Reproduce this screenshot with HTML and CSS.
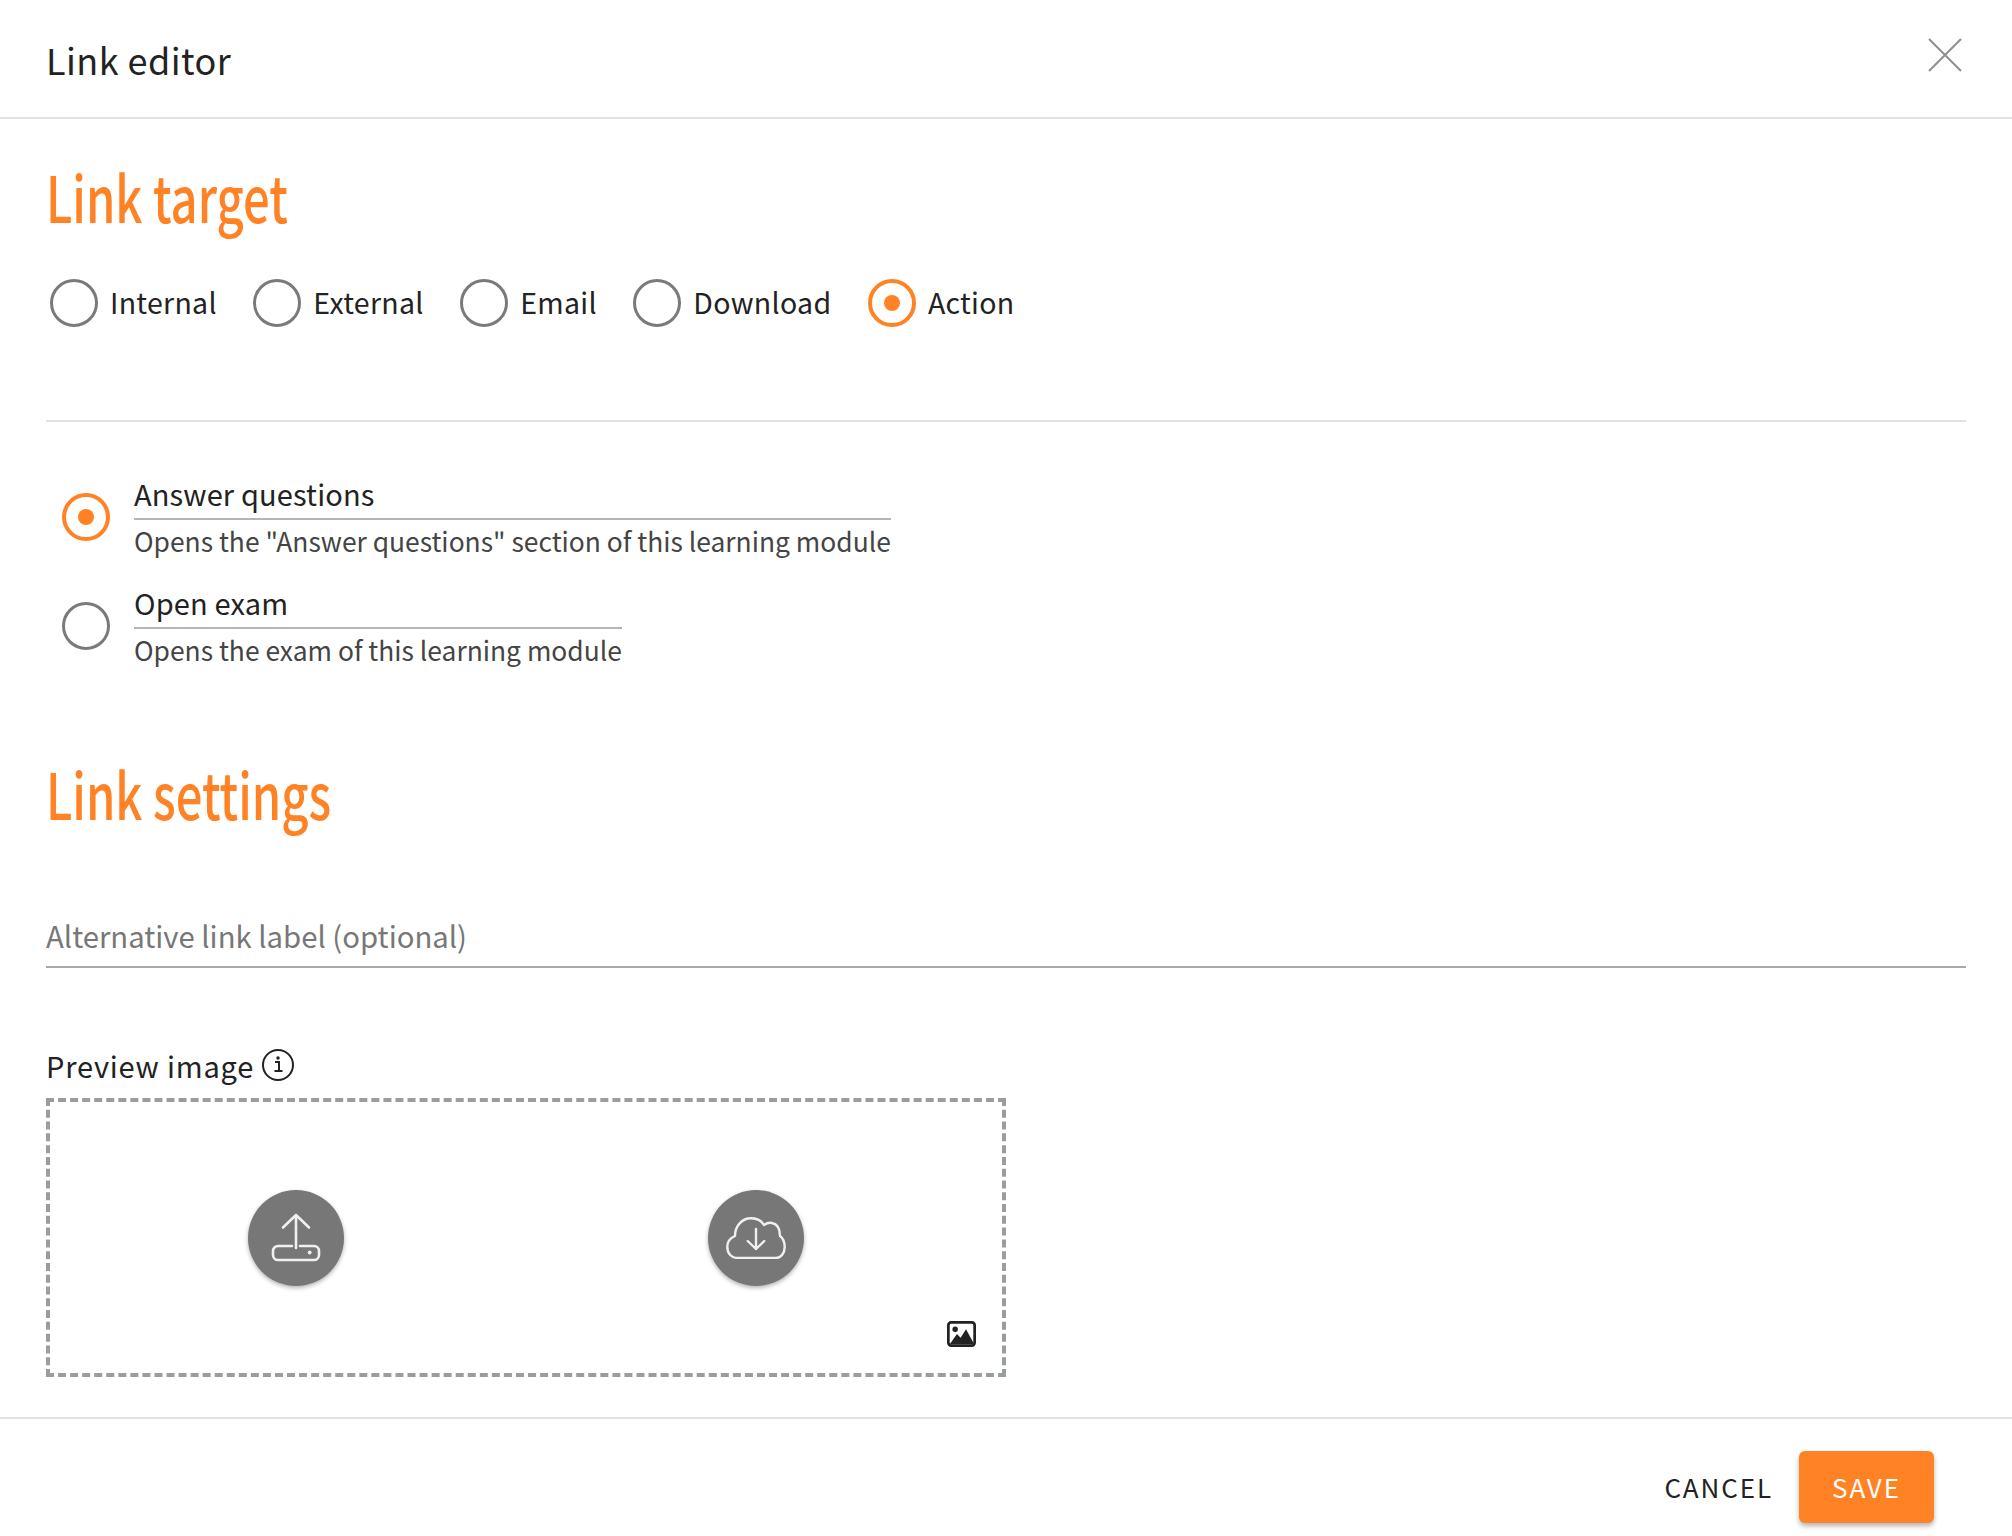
FILE: index.html
```html
<!DOCTYPE html>
<html lang="en">
<head>
<meta charset="utf-8">
<title>Link editor</title>
<link rel="stylesheet" href="styles.css">
</head>
<body>
<div class="dialog">
  <header class="head">
    <h1 class="title">Link editor</h1>
    <button class="close" aria-label="Close"><svg width="36" height="36" viewBox="0 0 36 36"><path d="M2 2l32 32M34 2L2 34" fill="none" stroke="#8f8f8f" stroke-width="2"/></svg></button>
  </header>
  <main class="body">
    <h2 class="section first"><span class="squeeze">Link target</span></h2>
    <div class="tabs">
      <label class="opt"><span class="radio"></span><span class="opt-text">Internal</span></label>
      <label class="opt"><span class="radio"></span><span class="opt-text">External</span></label>
      <label class="opt"><span class="radio"></span><span class="opt-text">Email</span></label>
      <label class="opt"><span class="radio"></span><span class="opt-text">Download</span></label>
      <label class="opt"><span class="radio on"></span><span class="opt-text">Action</span></label>
    </div>
    <hr class="rule">
    <div class="actions">
      <div class="action">
        <span class="radio on"></span>
        <div class="info"><div class="name">Answer questions</div><div class="desc">Opens the "Answer questions" section of this learning module</div></div>
      </div>
      <div class="action">
        <span class="radio"></span>
        <div class="info"><div class="name">Open exam</div><div class="desc">Opens the exam of this learning module</div></div>
      </div>
    </div>
    <h2 class="section second"><span class="squeeze">Link settings</span></h2>
    <div class="field">Alternative link label (optional)</div>
    <div class="preview-label">Preview image
      <svg class="info-icon" width="34" height="34" viewBox="0 0 34 34"><circle cx="17" cy="17" r="15" fill="none" stroke="#222" stroke-width="2"/><path d="M14 14h4v9M13.5 23h8" fill="none" stroke="#222" stroke-width="2"/><circle cx="17" cy="10" r="1.7" fill="#222"/></svg>
    </div>
    <div class="drop">
      <button class="fab"><svg width="50" height="49" viewBox="-1 -1 50 49" fill="none" stroke="#f0f0f0" stroke-width="2.6" stroke-linecap="round" stroke-linejoin="round"><path d="M24 34V1M11 13.500L24 1l13 12.500"/><path d="M20 32H6a5 5 0 0 0-5 5v4a5 5 0 0 0 5 5h36a5 5 0 0 0 5-5v-4a5 5 0 0 0-5-5H28"/><circle cx="37.700" cy="38.500" r="1.900" fill="#f0f0f0" stroke="none"/></svg></button>
      <button class="fab"><svg width="60" height="42" viewBox="0 0 60 42" fill="none" stroke="#f0f0f0" stroke-width="2.400" stroke-linecap="round" stroke-linejoin="round"><path d="M12 41C5 41 1.300 36 1.300 30C1.300 25 4 21 9 19C9 9 16 1.300 25 1.300C30 1.300 35 3 38 8C41 6 44 5.500 46 6C51 7 54 12 54 19C58 22 58.700 26 58.700 30C58.700 36 55 41 50 41Z"/><path d="M30 12v20M21.700 24l8.300 8 8.300-8"/></svg></button>
      <svg class="pic" width="29" height="26" viewBox="0 0 32 28" preserveAspectRatio="none"><rect x="1.500" y="1.500" width="29" height="25" rx="3" fill="none" stroke="#222" stroke-width="3"/><circle cx="9" cy="9" r="3" fill="#222"/><path d="M3 25l8-11 4 4 6-9 9 16z" fill="#222"/></svg>
    </div>
  </main>
  <footer class="foot">
    <button class="btn">CANCEL</button>
    <button class="btn save">SAVE</button>
  </footer>
</div>
</body>
</html>
```
FILE: styles.css
```css
* { box-sizing: border-box; }
html, body { margin: 0; padding: 0; background: #fff; }
body { font-family: "Noto Sans CJK SC", "Noto Sans", sans-serif; color: #222; }
.dialog { width: 2012px; height: 1536px; display: flex; flex-direction: column; overflow: hidden; }
.head { height: 119px; flex: none; border-bottom: 2px solid #e2e2e2; display: flex; justify-content: space-between; align-items: center; padding: 0 49px 0 46px; }
.title { margin: 0; font-size: 36px; font-weight: 400; line-height: 1; letter-spacing: .45px; }
.close { border: 0; background: none; padding: 0; margin: -7px 0 0; width: 36px; height: 36px; }
.body { flex: 1; padding: 0 46px; }
.section { margin: 0; color: #ff8225; font-size: 64px; font-weight: 500; line-height: 80px; }
.squeeze { display: inline-block; transform: scaleX(.737); transform-origin: left center; }
.section.first { padding-top: 36px; }
.section.second { margin-top: 72px; }
.tabs { display: flex; gap: 36.5px; margin-top: 44px; padding-left: 4px; }
.opt { display: flex; align-items: center; gap: 12px; font-size: 28.5px; line-height: 48px; letter-spacing: .3px; }
.opt-text { margin-top: -2px; }
.radio { display: block; flex: none; width: 48px; height: 48px; border-radius: 50%; border: 3px solid #7a7a7a; position: relative; }
.radio.on { border: 4px solid #ff8225; }
.radio.on::after { content: ""; position: absolute; left: 12px; top: 12px; width: 16px; height: 16px; border-radius: 50%; background: #ff8225; }
.rule { margin: 93px 0 0; border: 0; border-top: 2px solid #e2e2e2; }
.actions { margin-top: 40px; padding-left: 16px; }
.action { display: flex; align-items: center; gap: 24px; height: 109px; }
.info { display: flex; flex-direction: column; }
.name { font-size: 29px; line-height: 49px; border-bottom: 2px solid #b5b5b5; letter-spacing: .15px; }
.desc { font-size: 26.4px; line-height: 42px; padding-bottom: 2px; color: #444; }
.field { margin-top: 78px; font-size: 29.3px; line-height: 50px; color: #777; border-bottom: 2px solid #a8a8a8; height: 58px; }
.preview-label { margin-top: 76px; font-size: 29px; line-height: 42px; letter-spacing: .8px; display: flex; align-items: center; gap: 7px; }
.drop { margin-top: 12px; width: 960px; height: 279px; border: 4px dashed #9a9da0; display: flex; align-items: center; position: relative; padding-left: 198px; gap: 364px; }
.fab { width: 96px; height: 96px; border-radius: 50%; border: 0; background: #777; padding: 0; display: flex; align-items: center; justify-content: center; box-shadow: 0 2px 4px rgba(0,0,0,.3); }
.pic { position: absolute; right: 26px; bottom: 26px; }
.foot { flex: none; height: 119px; border-top: 2px solid #e2e2e2; display: flex; justify-content: flex-end; align-items: center; gap: 26px; padding: 18px 78px 0 0; }
.btn { border: 0; background: none; font: inherit; color: #222; font-size: 26px; letter-spacing: 1.9px; padding: 0; }
.save { width: 135px; height: 72px; background: #ff8225; color: #fff; border-radius: 6px; box-shadow: 0 3px 5px rgba(0,0,0,.3); }
```
